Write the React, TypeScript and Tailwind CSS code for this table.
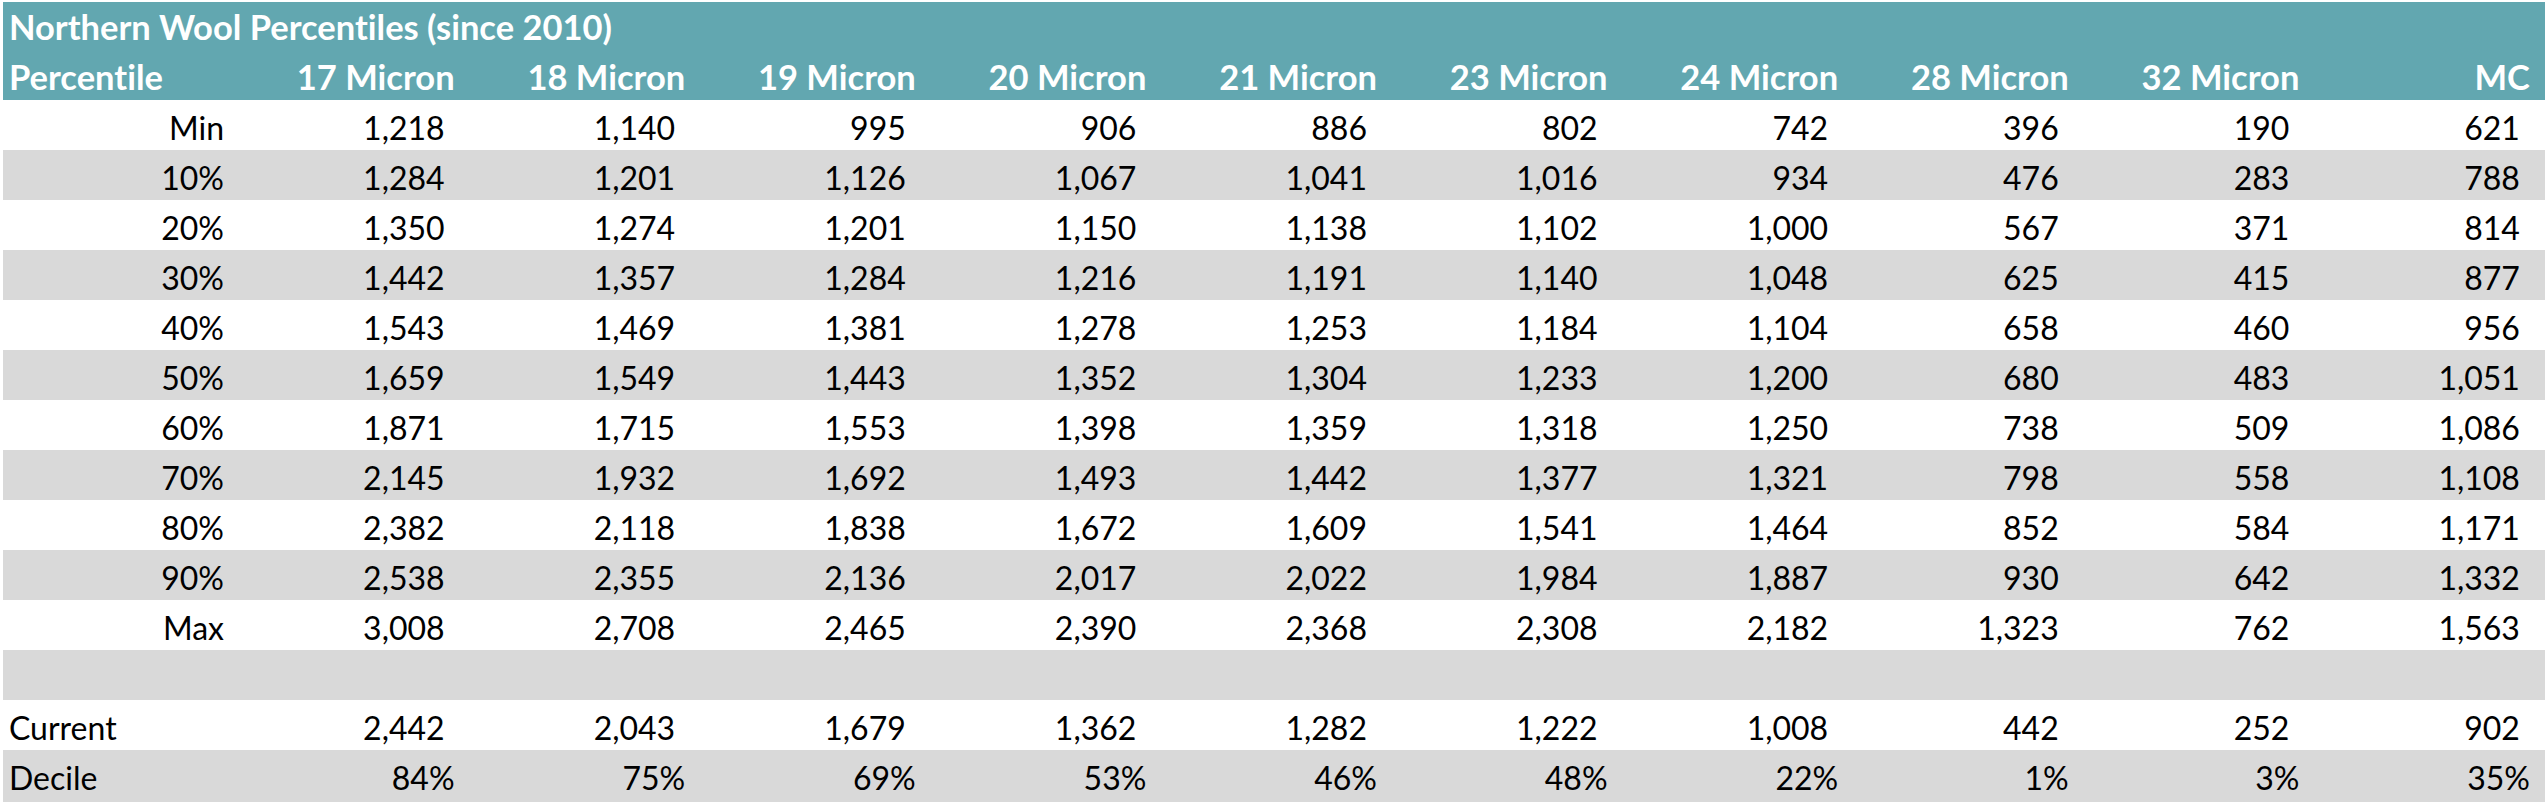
const cols = ["17 Micron", "18 Micron", "19 Micron", "20 Micron", "21 Micron", "23 Micron", "24 Micron", "28 Micron", "32 Micron", "MC"]

const rows: [string, string[]][] = [
  ["Min", ["1,218", "1,140", "995", "906", "886", "802", "742", "396", "190", "621"]],
  ["10%", ["1,284", "1,201", "1,126", "1,067", "1,041", "1,016", "934", "476", "283", "788"]],
  ["20%", ["1,350", "1,274", "1,201", "1,150", "1,138", "1,102", "1,000", "567", "371", "814"]],
  ["30%", ["1,442", "1,357", "1,284", "1,216", "1,191", "1,140", "1,048", "625", "415", "877"]],
  ["40%", ["1,543", "1,469", "1,381", "1,278", "1,253", "1,184", "1,104", "658", "460", "956"]],
  ["50%", ["1,659", "1,549", "1,443", "1,352", "1,304", "1,233", "1,200", "680", "483", "1,051"]],
  ["60%", ["1,871", "1,715", "1,553", "1,398", "1,359", "1,318", "1,250", "738", "509", "1,086"]],
  ["70%", ["2,145", "1,932", "1,692", "1,493", "1,442", "1,377", "1,321", "798", "558", "1,108"]],
  ["80%", ["2,382", "2,118", "1,838", "1,672", "1,609", "1,541", "1,464", "852", "584", "1,171"]],
  ["90%", ["2,538", "2,355", "2,136", "2,017", "2,022", "1,984", "1,887", "930", "642", "1,332"]],
  ["Max", ["3,008", "2,708", "2,465", "2,390", "2,368", "2,308", "2,182", "1,323", "762", "1,563"]],
]

const current = ["2,442", "2,043", "1,679", "1,362", "1,282", "1,222", "1,008", "442", "252", "902"]
const decile = ["84%", "75%", "69%", "53%", "46%", "48%", "22%", "1%", "3%", "35%"]

const grid = "grid grid-cols-[225px_repeat(10,230.6px)] items-end"

export default function App() {
  return (
    <div className="w-[2545px] h-[802px] bg-white pl-[3px] pt-[2px] flex flex-col font-['Lato',sans-serif] text-[32px] leading-none text-black [font-variant-ligatures:none]">
      {/* header */}
      <div className="h-[48px] bg-[#62a7b0] text-white font-bold text-[34.5px] flex items-end pl-[6px] pb-[6px]">
        Northern Wool Percentiles (since 2010)
      </div>
      <div className={`${grid} h-[50px] bg-[#62a7b0] text-white font-bold text-[34.5px] pb-[6px]`}>
        <div className="pl-[6px]">Percentile</div>
        {cols.map((c) => (
          <div key={c} className="text-right pr-[4px]">{c}</div>
        ))}
      </div>

      {/* percentile rows */}
      {rows.map(([label, vals], i) => (
        <div key={label} className={`${grid} h-[50px] pb-[6px] ${i % 2 === 1 ? "bg-[#d9d9d9]" : "bg-white"}`}>
          <div className="text-right pr-[4px]">{label}</div>
          {vals.map((v, j) => (
            <div key={j} className="text-right pr-[14px]">{v}</div>
          ))}
        </div>
      ))}

      <div className="h-[50px] bg-[#d9d9d9]" />

      <div className={`${grid} h-[50px] pb-[6px] bg-white`}>
        <div className="pl-[6px]">Current</div>
        {current.map((v, j) => (
          <div key={j} className="text-right pr-[14px]">{v}</div>
        ))}
      </div>
      <div className={`${grid} h-[52px] pb-[8px] bg-[#d9d9d9]`}>
        <div className="pl-[6px]">Decile</div>
        {decile.map((v, j) => (
          <div key={j} className="text-right pr-[4px]">{v}</div>
        ))}
      </div>
    </div>
  )
}
